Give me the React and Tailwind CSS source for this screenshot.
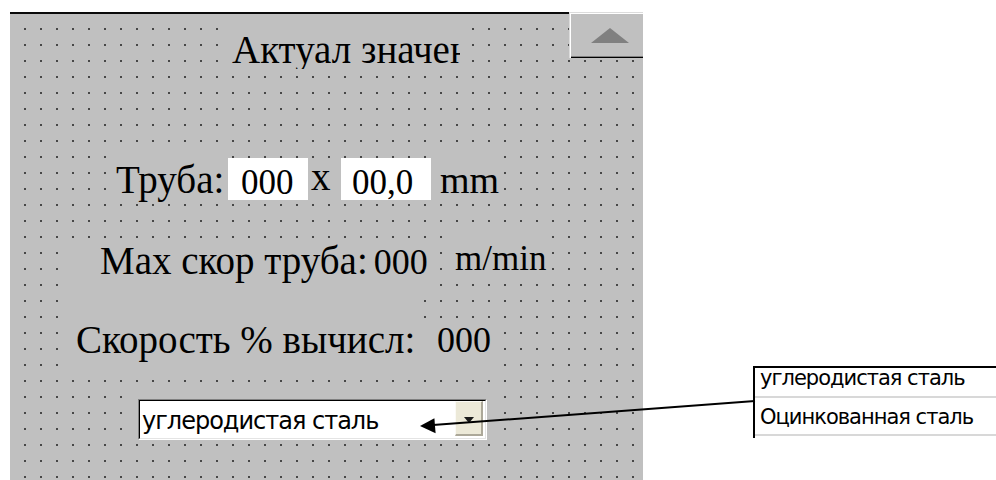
import React from "react";

// Form designer surface: grey canvas with a dot grid, labels, two edit boxes and a combo box,
// plus a callout showing the combo's list items.

const label = "bg-[#c0c0c0] whitespace-nowrap text-black [font-family:Liberation_Serif,serif]";
const field = "bg-white whitespace-nowrap text-black [font-family:Liberation_Serif,serif]";
const ui = "[font-family:DejaVu_Sans,sans-serif]";

function ScrollUpButton() {
  return (
    <div className="ml-auto -mt-[2px] w-[74px] h-[46px] bg-[#c0c0c0] shadow-[inset_1px_1px_0_#dcdcdc,inset_2px_2px_0_#ffffff,inset_0_-1px_0_#000000,inset_0_-2px_0_#808080]">
      <svg width="74" height="46" viewBox="0 0 74 46" className="block">
        <polygon points="41,16 22,31 60,31" fill="#808080" />
      </svg>
    </div>
  );
}

function ComboBox() {
  return (
    <div className="w-[349px] h-[41px] border-t border-l border-t-[#808080] border-l-[#808080] border-b border-r border-b-white border-r-white">
      <div className="flex h-full border-t border-l border-t-[#000000] border-l-[#000000] border-b border-r border-b-[#e4e4e4] border-r-[#e4e4e4] bg-white">
        <div className={`${ui} flex-1 pl-[2px] pt-[8px] text-[24px] leading-[24px] tracking-[-1px] text-black whitespace-nowrap`}>
          углеродистая сталь
        </div>
        <div className="mr-[2px] w-[28px] h-[35px] bg-[#ece9d8] border-t border-l border-t-[#fbfaf5] border-l-[#fbfaf5] border-b-2 border-r-2 border-b-[#aca899] border-r-[#aca899] flex justify-center pt-[15px]">
          <svg width="10" height="6" viewBox="0 0 10 6" className="block">
            <polygon points="0,0 10,0 5,6" fill="#1a1a1a" />
          </svg>
        </div>
      </div>
    </div>
  );
}

function ListCallout() {
  return (
    <div className={`${ui} absolute left-[753px] top-[366px] w-[260px] h-[72px] bg-white border-t-2 border-l-2 border-black text-[21px] leading-[21px] tracking-[-1px] text-black`}>
      <div className="h-[30px] pl-[5px] border-b-2 border-[#d8d8d8] whitespace-nowrap">углеродистая сталь</div>
      <div className="h-[38px] pl-[5px] pt-[9px] border-b-2 border-[#d8d8d8] whitespace-nowrap">Оцинкованная сталь</div>
    </div>
  );
}

function Arrow() {
  return (
    <svg className="absolute left-0 top-0 pointer-events-none" width="996" height="480" viewBox="0 0 996 480">
      <line x1="433" y1="425" x2="755" y2="401" stroke="#000" strokeWidth="2" />
      <polygon points="420,426 435.6,433.3 434.4,418.3" fill="#000" />
    </svg>
  );
}

export default function App() {
  return (
    <div className="relative w-[996px] h-[480px] overflow-hidden bg-white pl-[10px] pt-[12px]">
      <div className="w-[633px] h-[468px] border-t-2 border-[#0a0a0a] bg-[#c0c0c0] bg-[image:radial-gradient(circle,#474747_1px,transparent_1.35px)] bg-[length:16px_16px] bg-size-[16px_16px] bg-[position:7px_7px] bg-position-[7px_7px] flex flex-col">
        {/* caption row with the scroll button; the caption is wider than its label and gets cut */}
        <div className="flex items-start">
          <div className={`${label} overflow-hidden ml-[212px] mt-[6px] w-[238px] h-[49px] pl-[10px] pt-[10px] text-[39px] leading-[39px]`}>
            Актуал значен
          </div>
          <ScrollUpButton />
        </div>

        {/* pipe size */}
        <div className="flex items-start mt-[81px]">
          <div className={`${label} ml-[100px] w-[118px] h-[49px] pl-[6px] pt-[10px] text-[39px] leading-[39px]`}>Труба:</div>
          <div className={`${field} mt-[8px] w-[80px] h-[42px] pl-[13px] pt-[7px] text-[35px] leading-[35px]`}>000</div>
          <div className={`${label} mt-[8px] w-[33px] h-[40px] pl-[3px] text-[39px] leading-[37px]`}>x</div>
          <div className={`${field} mt-[8px] w-[90px] h-[42px] pl-[11px] pt-[7px] text-[35px] leading-[35px]`}>00,0</div>
          <div className={`${label} w-[69px] h-[49px] pl-[9px] pt-[11px] text-[38px] leading-[38px]`}>mm</div>
        </div>

        {/* max pipe speed */}
        <div className="flex items-start mt-[30px]">
          <div className={`${label} ml-[55px] mt-[10px] w-[370px] h-[52px] pl-[35px] pt-[1px] text-[39px] leading-[39px]`}>
            Max скор труба:<span className="ml-[6px] text-[36px]">000</span>
          </div>
          <div className={`${label} ml-[12px] w-[103px] h-[50px] pl-[8px] pt-[11px] text-[35px] leading-[35px]`}>m/min</div>
        </div>

        {/* computed speed */}
        <div className="flex items-start mt-[2px]">
          <div className={`${label} ml-[55px] w-[355px] h-[78px] pl-[11px] pt-[26px] text-[39px] leading-[39px]`}>
            Скорость % вычисл:
          </div>
          <div className={`${label} mt-[32px] w-[80px] h-[46px] pl-[17px] text-[36px] leading-[29px]`}>000</div>
        </div>

        {/* steel grade selector */}
        <div className="flex mt-[18px]">
          <div className="ml-[120px] w-[360px] h-[50px] bg-[#c0c0c0] pl-[8px] pt-[9px]">
            <ComboBox />
          </div>
        </div>
      </div>

      <ListCallout />
      <Arrow />
    </div>
  );
}
